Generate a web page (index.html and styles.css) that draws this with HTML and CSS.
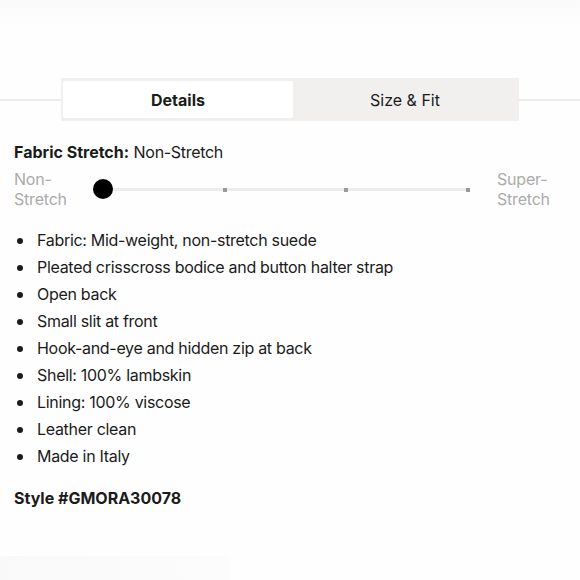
FILE: index.html
```html
<!DOCTYPE html>
<html lang="en">
<head>
<meta charset="utf-8">
<title>Details</title>
<link rel="stylesheet" href="styles.css">
</head>
<body>
<div class="page">
  <div class="top-band"></div>
  <div class="tabs-row">
    <div class="rule"></div>
    <div class="tabs">
      <div class="tab active">Details</div>
      <div class="tab">Size &amp; Fit</div>
    </div>
    <div class="rule"></div>
  </div>

  <div class="content">
    <p class="stretch-title"><strong>Fabric Stretch:</strong> <span class="light">Non-Stretch</span></p>
    <div class="slider-row">
      <div class="slider-label left">Non-<br>Stretch</div>
      <div class="slider">
        <div class="track">
          <div class="seg"><span class="tick"></span></div>
          <div class="seg"><span class="tick"></span></div>
          <div class="seg"><span class="tick"></span></div>
          <span class="knob"></span>
        </div>
      </div>
      <div class="slider-label right">Super-<br>Stretch</div>
    </div>

    <ul class="features">
      <li>Fabric: Mid-weight, non-stretch suede</li>
      <li>Pleated crisscross bodice and button halter strap</li>
      <li>Open back</li>
      <li>Small slit at front</li>
      <li>Hook-and-eye and hidden zip at back</li>
      <li>Shell: 100% lambskin</li>
      <li>Lining: 100% viscose</li>
      <li>Leather clean</li>
      <li>Made in Italy</li>
    </ul>

    <p class="style-no">Style #GMORA30078</p>
  </div>
  <div class="bottom-band"></div>
</div>
</body>
</html>
```

FILE: styles.css
```css
* { box-sizing: border-box; }

html, body {
  margin: 0;
  padding: 0;
  background: #fefefe;
}

body {
  font-family: Inter, "Liberation Sans", Arial, sans-serif;
  color: #1b1b1b;
  font-size: 16px;
  width: 580px;
  height: 580px;
  overflow: hidden;
}

.page {
  display: flex;
  flex-direction: column;
  height: 580px;
}

.top-band {
  height: 24px;
  background: linear-gradient(to bottom, #fbfafa, #fdfdfd);
}

.tabs-row {
  margin-top: 54px;
  display: flex;
  align-items: center;
}

.rule {
  flex: 1;
  height: 2px;
  background: #ebebeb;
}

.tabs {
  width: 458px;
  height: 43px;
  background: #f1f0ef;
  padding: 3px 2px;
  display: grid;
  grid-template-columns: 230px 1fr;
}

.tab {
  display: flex;
  align-items: center;
  justify-content: center;
  font-size: 16px;
  color: #1b1b1b;
}

.tab.active {
  background: #ffffff;
  font-weight: 700;
  border-radius: 2px;
}

.content {
  padding: 0 14px;
  flex: 1;
}

.stretch-title {
  margin: 21px 0 0;
  line-height: 20px;
}

.stretch-title strong { font-weight: 700; }

.stretch-title .light { letter-spacing: -0.3px; }

.slider-row {
  margin-top: 8px;
  display: flex;
  align-items: center;
}

.slider-label {
  color: #ababab;
  line-height: 19.5px;
  font-size: 16px;
  letter-spacing: -0.2px;
}

.slider-label.left { width: 79px; }

.slider-label.right { margin-left: 19px; }

.slider {
  width: 385px;
  padding: 0 10px;
}

.track {
  position: relative;
  height: 3px;
  background: #ececec;
  display: flex;
}

.seg {
  flex: 1;
  display: flex;
  justify-content: flex-end;
  align-items: center;
}

.tick {
  width: 4px;
  height: 4px;
  margin-right: -2px;
  background: #9a9a9a;
}

.knob {
  position: absolute;
  left: -10px;
  top: -9px;
  width: 20px;
  height: 20px;
  border-radius: 50%;
  background: #000;
}

.features {
  list-style: none;
  margin: 18px 0 0;
  padding: 0;
}

.features li {
  display: flex;
  align-items: center;
  line-height: 27px;
  font-size: 16px;
  letter-spacing: -0.3px;
}

.features li::before {
  content: "";
  flex: none;
  width: 6px;
  height: 6px;
  border-radius: 50%;
  background: #1b1b1b;
  margin-left: 3px;
  margin-right: 14px;
}

.style-no {
  margin: 18px 0 0;
  line-height: 20px;
  font-weight: 700;
}

.bottom-band {
  height: 24px;
  width: 230px;
  background: linear-gradient(to right, #f9f9f9, #fcfcfc);
}
```
